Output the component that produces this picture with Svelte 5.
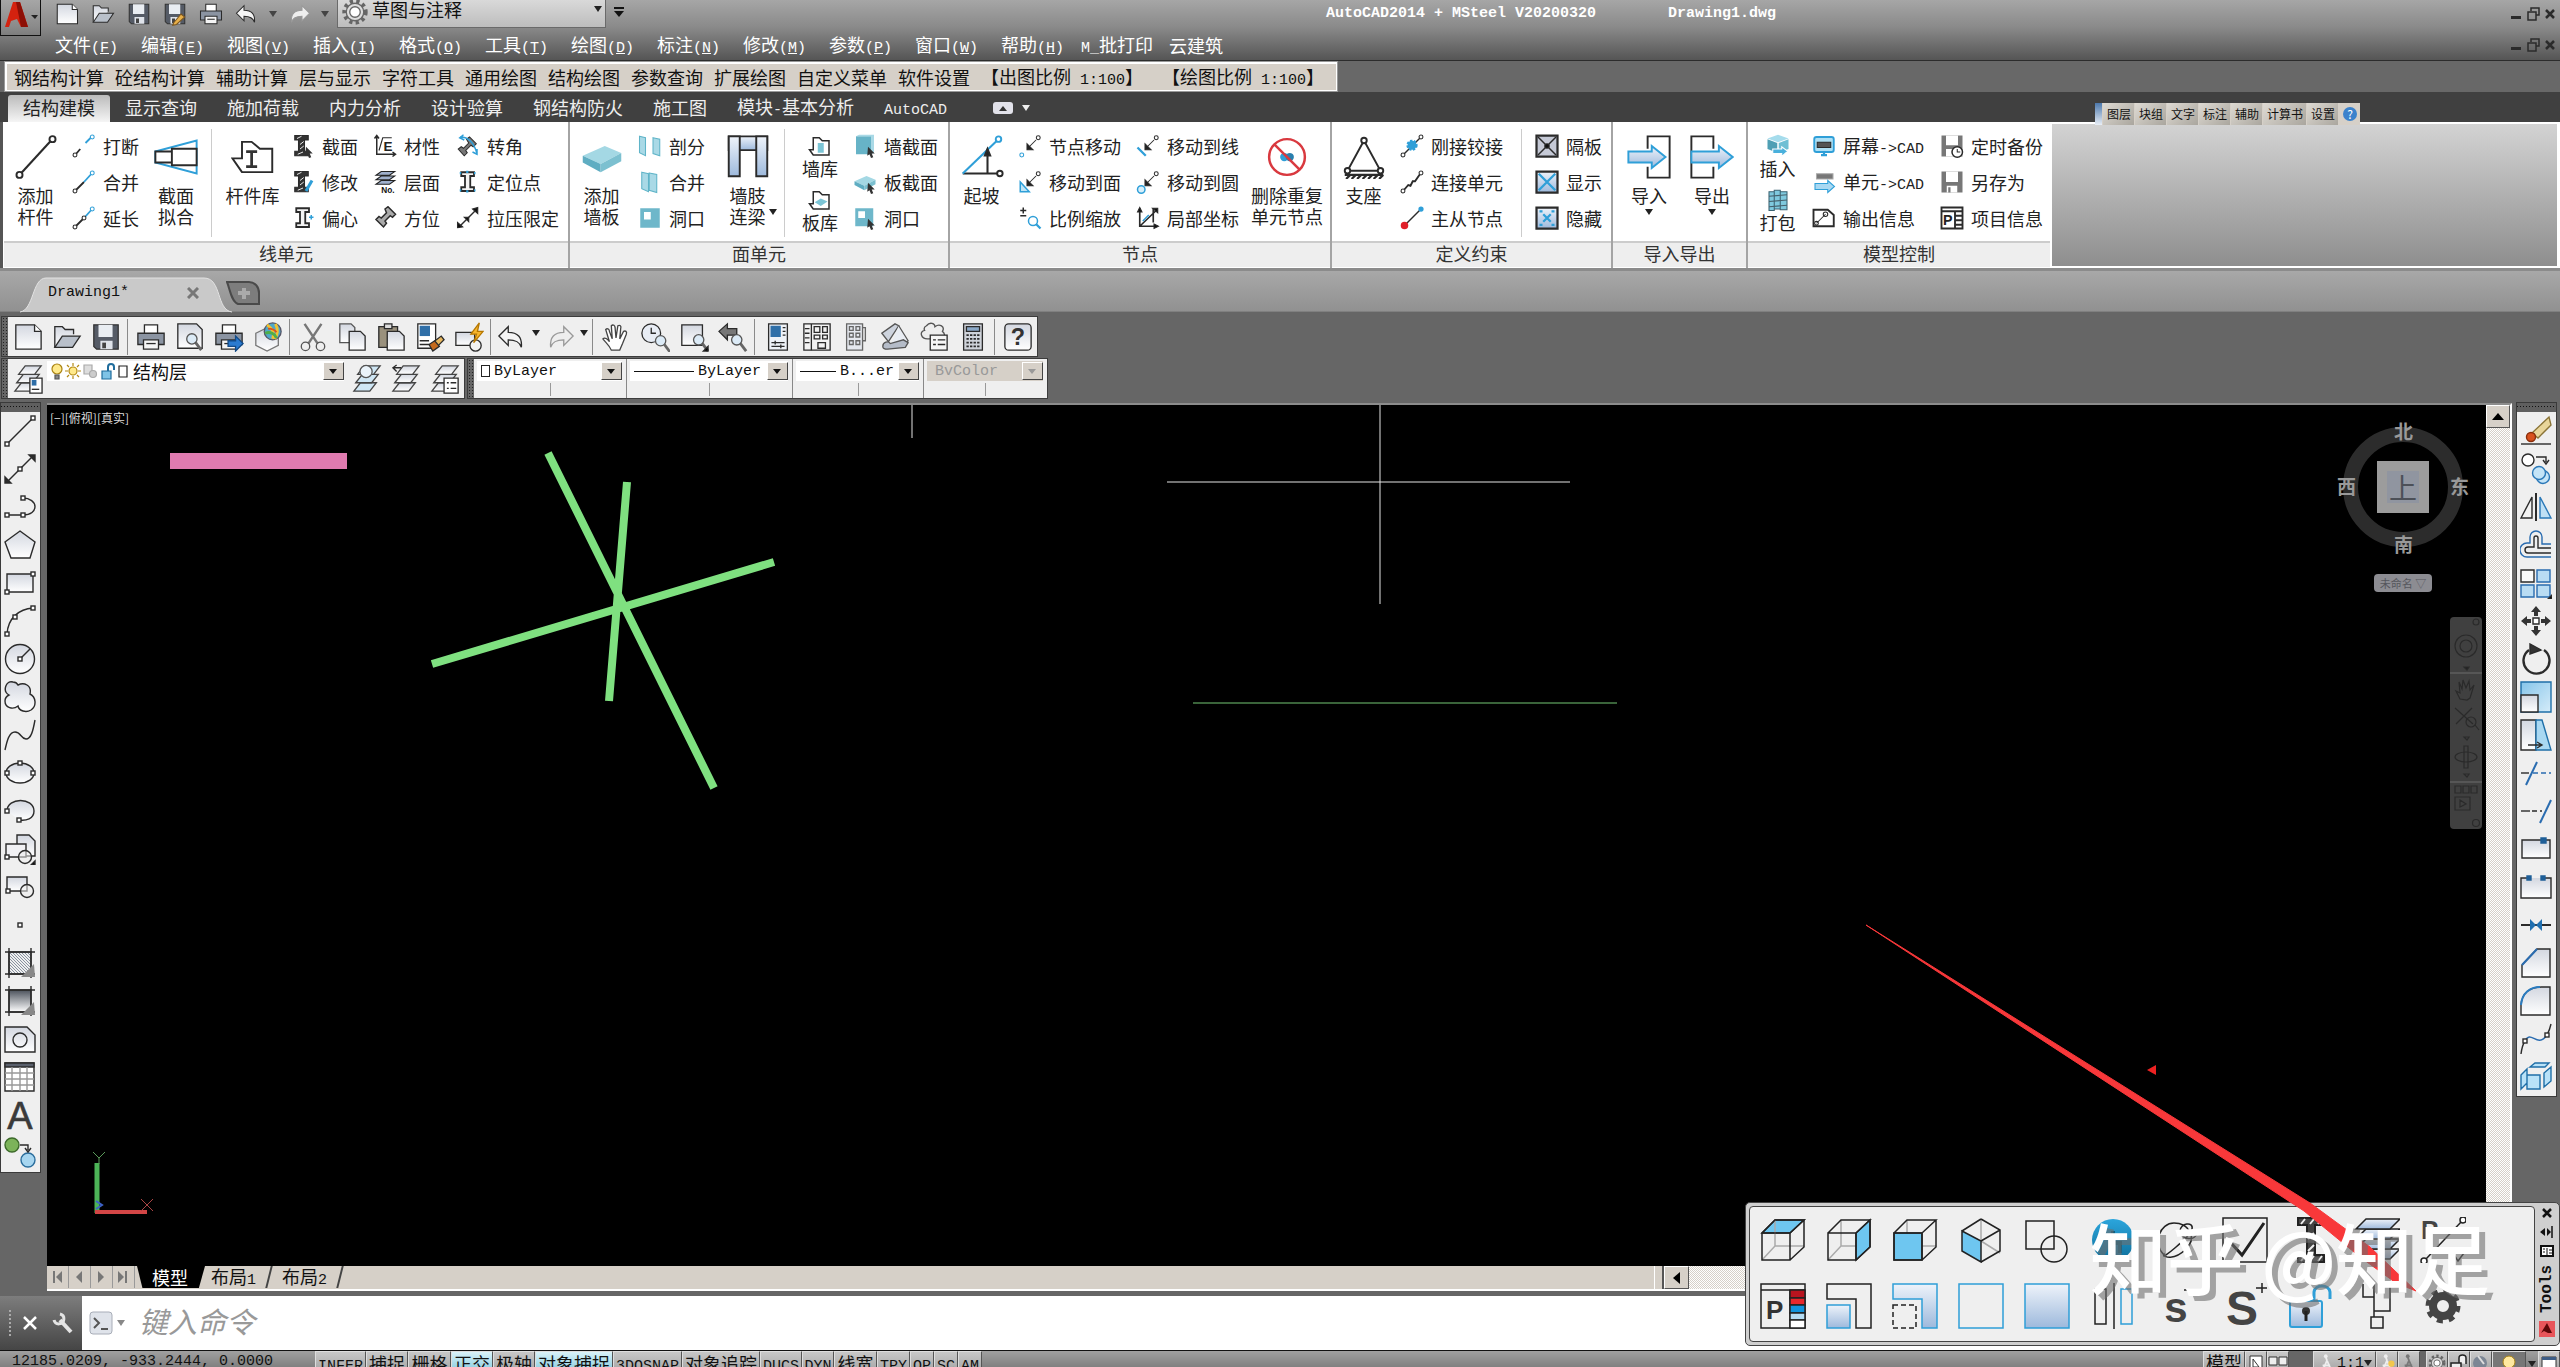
<script>
    const ink = "#2b2b2b";
    const sky = "#2f9fd8";
    const node = (x, y) => `<rect x="${x - 2}" y="${y - 2}" width="4" height="4" fill="#fff" stroke="${ink}"/>`;
    const dot = (x, y, c = ink) => `<circle cx="${x}" cy="${y}" r="2.6" fill="#fff" stroke="${c}"/>`;
    const mag = (x, y) =>
        `<path d="M${x + 4} ${y + 4}l6 8" stroke="#666" stroke-width="3"/><circle cx="${x}" cy="${y}" r="5.5" fill="#dcebf7" stroke="#555"/>`;
    const sheets = (f = "url(#steel)") =>
        `<g fill="${f}" stroke="#444"><path d="M2 29l7-9h17l-7 9z"/><path d="M4 20l7-9h17l-7 9z"/><path d="M6 11l7-9h17l-7 9z"/></g>`;
    const ibeam = `<path d="M7 3h17v5h-5v15h5v5H7v-5h5V8H7z" fill="#f4f4f4" stroke-width="2.4"/>`;
    const beamDark = `<path d="M5 2h18v6h-5v15h5v6H5v-6h5V8H5z" fill="#333"/><path d="M8 6l6-3M12 14l5-4M12 20l5-4M9 27l7-3" stroke="#fff" stroke-width="1.2"/>`;
    const cubeLines = `<path d="M15 3V29L2 43M15 29H44" stroke="#aaa"/>`;
    const cubeEdge = `<path d="M2 16H30V43H2ZM2 16L15 3H44L30 16M44 3V30L30 43"/>`;
    const slab = `<path d="M2 15L18 8l12 5-15 8z" fill="#a4d8e4" stroke="none"/><path d="M2 15l13 6v6L2 20z" fill="#5fadc2" stroke="none"/><path d="M15 21l15-8v6l-15 8z" fill="#7cc0d0" stroke="none"/>`;
    const moveArrow = `<path d="M24 8L13 19"/><path d="M12 13v8h8z" fill="#222"/>${dot(27, 5)}`;
    const cursor = `<path d="M20 17l9 9-4 0 2 5-3 1-2-5-3 2z" fill="#333" stroke="none"/>`;
    const floppy = `<path d="M3 3h26v26H6l-3-3z" fill="#555b66" stroke="#333"/><path d="M8 3h15v13H8z" fill="#e9edf2" stroke="none"/><path d="M10 20h13v9H10z" fill="#dfe3ea" stroke="none"/><path d="M12 22h4v6h-4z" fill="#444" stroke="none"/>`;
    const sheet = `<path d="M3 3h20l7 7v19H3z" fill="url(#steel)"/><path d="M23 3v7h7" fill="#fff"/>`;
    const folder = `<path d="M3 27V5h8l3 3h9v5" fill="url(#steel)"/><path d="M3 27l8-12h19l-8 12z" fill="#b9c0ca"/>`;
    const printer = `<path d="M9 12V3h14v9" fill="#fff"/><path d="M2 12h28v12H2z" fill="#8b94a2"/><path d="M8 19h16v10H8z" fill="#f5f5f5"/><path d="M11 23h10"/>`;
    const undo = `<path d="M12 5v6c10 0 15 5 14 16-2-6-6-8-14-8v6L2 15z" fill="#f5f5f5"/>`;
    const redo = `<path d="M20 5v6C10 11 5 16 6 27c2-6 6-8 14-8v6l10-10z" fill="#eee" stroke="#999"/>`;
    const hand = `<path d="M11 30c-2-5-6-8-9-12 2-2 5 0 7 3L5 8c2-2 4 0 4 2l3 8-1-14c2-2 4 0 4 2l1 11 2-13c2-1 4 0 3 3l-1 11 4-8c2-1 4 0 3 3l-4 10-3 7z" fill="#fff" stroke="#444"/>`;
    const gear = (x, y, r, f = "#ddd") =>
        `<circle cx="${x}" cy="${y}" r="${r}" fill="none" stroke="#666" stroke-width="5" stroke-dasharray="3.6 3.6"/><circle cx="${x}" cy="${y}" r="${r - 2}" fill="${f}" stroke="#666" stroke-width="1.500"/><circle cx="${x}" cy="${y}" r="${r - 6}" fill="#fff" stroke="#666" stroke-width="1.500"/>`;
    const crop = `<path d="M5 1v30M27 1v30M1 5h30M1 27h30"/>`;
    const person = (c) => `<path d="M13 4l3 8 6 14M16 12l-6 14M9 20h12" stroke="${c}" stroke-width="3"/><circle cx="14" cy="5" r="3" fill="${c}" stroke="none"/>`;

    const icons = {
        // quick access and standard bar
        new: sheet,
        open: folder,
        save: floppy,
        saveas: floppy + `<path d="M14 28l10-12 5 4-11 10-5 1z" fill="#e8b04a" stroke="#7a5520"/>`,
        print: printer,
        undo,
        redo,
        preview: `<path d="M3 2h20l6 6v20H3z" fill="url(#steel)"/>${mag(18, 18)}`,
        plot: printer + `<path d="M15 20h8v-5l8 8-8 8v-5h-8z" fill="#2b7bd0" stroke="#134a86"/>`,
        web: `<path d="M3 12l12-6 12 6v13l-12 6-12-6z" fill="url(#steel)" stroke="#777"/><circle cx="21" cy="10" r="9" fill="#4fa8c9" stroke="#556"/><path d="M15 3c6 4 8 9 6 15M24 2c3 6 2 12-1 16" stroke="#f2c230" stroke-width="3"/><path d="M13 12c5-2 10 0 12 5" stroke="#4fae4a" stroke-width="3"/><path d="M16 7c4 0 7 1 9 4" stroke="#d9531e" stroke-width="2"/>`,
        cut: `<path d="M7 2l14 21M25 2L11 23" stroke-width="2.6" stroke="#777"/><circle cx="8" cy="26" r="4.500" stroke="#555"/><circle cx="24" cy="26" r="4.500" stroke="#555"/>`,
        copy: `<path d="M3 2h12l4 4v16H3z" fill="url(#steel)" stroke="#555"/><path d="M13 10h12l5 5v15H13z" fill="url(#steel)"/>`,
        paste: `<path d="M3 5h20v22H3z" fill="#9a917d"/><path d="M9 2h8v5H9z" fill="#ddd"/><path d="M12 10h13l5 5v15H12z" fill="url(#steel)"/>`,
        match: `<path d="M3 2h19v26H3z" fill="#fff"/><path d="M5 4h11v11H5z" fill="#2f6fa8" stroke="none"/><path d="M5 20h10M5 24h10"/><path d="M20 21l8-6 3 4-7 7z" fill="#e6b65e"/><path d="M15 24l6-4 5 6-7 5z" fill="#c46a1d"/>`,
        blockedit: `<path d="M2 11h20v14H2z" fill="url(#steel)"/><circle cx="23" cy="25" r="6" fill="#f2f2f2"/><path d="M27 1l-9 12h6l-3 9 10-12h-6z" fill="#f7b52c" stroke="#b57700"/>`,
        pan: hand,
        zoom: `<circle cx="12" cy="12" r="10" fill="#e8edf5"/><path d="M12 6v6h5"/>${mag(22, 20)}`,
        zoomwin: `<path d="M3 3h22v22H3z" fill="url(#steel)"/>${mag(21, 19)}<path d="M31 26v5h-5z" fill="#000"/>`,
        zoomprev: `<path d="M1 10l9-8v5h10v7H10v5z" fill="#777"/>${mag(20, 19)}`,
        props: `<path d="M6 2h20v28H6z" fill="#eef2f7"/><path d="M8 4h11v12H8z" fill="#2f6fa8" stroke="none"/><path d="M21 6h3M21 10h3M21 14h3M9 22h14M9 26h14M13 20v4M19 24v4"/>`,
        center: `<path d="M2 2h28v28H2z" fill="#f2f2f2"/><path d="M10 2v28M3 7h5M3 12h5M3 17h5M3 22h5M13 5h6v6h-6zM22 5h5v6h-5zM13 14h6v4h-6zM22 14h5v4h-5zM17 22h8v6h-8z"/>`,
        palettes: `<path d="M6 2h17v28H6z" fill="#e5e8ee" stroke="#666"/><path d="M9 5h4v4H9zM16 5h4v4h-4zM9 12h4v4H9zM16 12h4v4h-4zM9 20h4v4H9zM16 20h4v4h-4zM23 6h3v14h-3" stroke="#666"/>`,
        sheetset: `<path d="M2 12l7 9L20 4l-4-2z" fill="#cdd3dd" stroke="#555"/><path d="M20 4l10 16-6 5-13 1" fill="#e9edf3" stroke="#555"/><path d="M3 26c0-5 6-6 8-3l14-4 5 3-3 5-19 2c-3 0-5-1-5-3z" fill="#b5bcc8" stroke="#555"/>`,
        markup: `<path d="M8 4c4-5 9-2 9 1 5-4 11 0 8 5 4 3 2 8-2 8H9c-7 0-9-8-3-9-1-2 0-4 2-5z" fill="#eee" stroke="#555"/><path d="M12 14h18v16H12z" fill="#f6f6f6"/><path d="M15 19h3M15 24h3M20 19h8M20 24h8"/>`,
        calc: `<path d="M6 2h20v28H6z" fill="#cfd3da"/><path d="M9 5h14v5H9z" fill="#8ba9c8"/><path d="M9 14h14M9 18h14M9 22h14M9 26h14" stroke-dasharray="2.5 1.3" stroke-width="2"/>`,
        help: `<rect x="2" y="2" width="28" height="28" rx="4" fill="url(#steel)"/><text x="16" y="25" text-anchor="middle" font-size="25" font-weight="bold" font-family="Liberation Sans" fill="#333" stroke="none">?</text>`,
        layers: sheets() + `<path d="M18 15h13v16H18z" fill="#fff"/><path d="M20 17h5v6h-5z" fill="#2f6fa8" stroke="none"/><path d="M20 27h8"/>`,
        layer1: sheets("#cfe6f4") + `<circle cx="15" cy="8" r="6.500" fill="#eaf3fa" stroke="#555"/>`,
        layer2: sheets() + `<path d="M11 4H3m3-3L2 4l4 4"/>`,
        layer3: sheets() + `<path d="M15 15h15v16H15z" fill="#fff"/><path d="M18 20h2M18 26h2M22 20h6M22 26h6"/>`,
        // draw bar
        line: `<path d="M3 29L29 3"/>${node(3, 29)}${node(29, 3)}`,
        xline: `<path d="M3 29L29 3"/><path d="M25 2h6v6zM1 24v6h6z" fill="${ink}"/>${node(16, 16)}`,
        pline: `<path d="M3 24H19C27 24 31 20 31 15.500S26 7 19 7"/>${node(3, 24)}${node(19, 24)}${node(19, 7)}`,
        polygon: `<path d="M16 2L31 13L26 29H7L1 13Z" fill="url(#steel)"/>`,
        rect: `<path d="M3 7H29V25H3Z" fill="url(#steel)"/>${node(3, 25)}${node(29, 7)}`,
        arc: `<path d="M3 29C4 13 15 4 29 3"/>${node(3, 29)}${node(11, 12)}${node(29, 3)}`,
        circle: `<circle cx="16" cy="16" r="14.500" fill="url(#steel)"/><path d="M16 16L26 6"/>${node(16, 16)}`,
        cloud: `<path d="M14 4c6-3 14 0 12 9 6 3 7 12 1 16-5 3-12 1-13-4-5 4-13 2-13-5 0-4 2-5 4-6C-2 10 2-1 9 1c3 0 4 1 5 3z" fill="url(#steel)"/>`,
        spline: `<path d="M1 31C3 22 5 13 11 13S17 20 22 20S29 12 31 1"/>`,
        ellipse: `<ellipse cx="16" cy="16" rx="14" ry="10" fill="url(#steel)"/>${node(16, 6)}${node(3, 16)}${node(29, 16)}`,
        ellarc: `<path d="M3 16C3 2 30 2 30 16C30 24 22 26 15 25" fill="url(#steel)"/>${node(3, 16)}${node(15, 25)}`,
        insert: `<path d="M13 2h12l6 6v15H13z" fill="url(#steel)"/><path d="M2 11h20v13H2z" fill="#f1f1f4"/><circle cx="21" cy="24" r="6.500" fill="#eee8"/>${node(3, 24)}<path d="M31 28v4h-4z" fill="#000"/>`,
        block: `<path d="M3 6h20v14H3z" fill="url(#steel)"/><circle cx="23" cy="20" r="6.500" fill="#eee8"/>${node(4, 20)}`,
        point: node(16, 16),
        hatch: `<path d="M5 5h22v22H5z" fill="url(#diag)"/>${crop}<path d="M30 17L17 30h14z" fill="#888" stroke="none"/>`,
        gradient: `<path d="M5 5h22v22H5z" fill="url(#shade)"/>${crop}<path d="M30 17L17 30h14z" fill="#888" stroke="none"/>`,
        region: `<path d="M1 4h22l8 8v17H1z" fill="url(#steel)"/><circle cx="16" cy="17" r="7"/>`,
        table: `<path d="M1 2h29v28H1z" fill="#fff"/><path d="M1 2h29v4H1z" fill="#5a606c"/><path d="M8 6v24M16 6v24M23 6v24M1 12h29M1 18h29M1 24h29" stroke="#999"/>`,
        text: `<text x="16" y="30" text-anchor="middle" font-size="38" font-family="Liberation Sans" fill="#3a3a3a" stroke="#3a3a3a" stroke-width="0.6">A</text>`,
        addsel: `<circle cx="8" cy="8" r="7" fill="#7cb35a" stroke="#3c6a2a"/><circle cx="24" cy="23" r="7" fill="#a7d6f0" stroke="#2a6d9c"/><path d="M16 8h8v5m-3-2l3 4 3-4"/>`,
        // modify bar
        erase: `<path d="M12 18L29 2l2 8-13 13z" fill="#e8d59a" stroke="#8a7437"/><circle cx="11" cy="22" r="4.500" fill="#d8521f" stroke="#8a2f0c"/><path d="M1 29h30" stroke-width="2" stroke="#666"/>`,
        mcopy: `<circle cx="8" cy="7" r="6" fill="#fff"/><g fill="#c4e4f7" stroke="#2a78b8"><circle cx="23" cy="24" r="6.500"/><circle cx="19" cy="20" r="6.500"/></g><path d="M16 4h10v5m-3-2l3 4 3-4"/>`,
        mirror: `<path d="M12 6v21H1z" fill="#f2f2f2"/><path d="M20 6v21h11z" fill="#bfe0f5" stroke="#2a78b8"/><path d="M16 2v28" stroke-width="2"/>`,
        offset: `<path d="M31 15H22V8a6 6 0 0 0-12 0v6H7a7 7 0 0 0 0 14h24" stroke="#2a6cb0"/><path d="M31 19H18V9a2 2 0 0 0-4 0v9H8a3 3 0 0 0 0 6h23"/>`,
        array: `<path d="M1 3h13v12H1z" fill="#fafafa"/><g fill="#b9dcf3" stroke="#2a6cb0"><path d="M17 3h13v12H17zM1 18h13v12H1zM17 18h13v12H17z"/></g><path d="M32 28v4h-4z" fill="#000"/>`,
        move: `<g fill="#333" stroke="none"><path d="M16 1l5 6h-3v4h-4V7h-3zM16 31l5-6h-3v-4h-4v4h-3zM1 16l6-5v3h4v4H7v3zM31 16l-6-5v3h-4v4h4v3z"/></g><path d="M13 13h6v6h-6z" fill="#fff"/>`,
        rotate: `<path d="M9 7A13 13 0 1 0 24 7" stroke-width="2.400"/><path d="M10 1v10l11-4z" fill="#333"/>`,
        scale: `<path d="M1 1h30v30H1z" fill="url(#blue)" stroke="#1f6fa8"/><path d="M1 14h17v17H1z" fill="url(#steel)"/>`,
        stretch: `<path d="M1 1h15v30H1z" fill="url(#steel)"/><path d="M16 1h6l9 30H16z" fill="#a9d8f2" stroke="#1f6fa8"/><path d="M8 26h13m-4-3l5 3-5 3"/>`,
        trim: `<path d="M1 16h8"/><path d="M13 16h18" stroke="#2a6cb0" stroke-dasharray="5 3"/><path d="M6 28L17 5" stroke="#2a6cb0" stroke-width="2"/>`,
        extend: `<path d="M1 16h9"/><path d="M12 16h10" stroke-dasharray="5 3"/><path d="M20 28L31 5" stroke="#2a6cb0" stroke-width="2"/>`,
        breakpt: `<path d="M2 7h28v18H2z" fill="url(#steel)"/><path d="M21 5h5v5h-5z" fill="#1f5f98" stroke="#1f5f98"/>`,
        break2: `<path d="M9 7H1v20h30V7h-8" fill="url(#steel)"/><path d="M7 5h4v4H7zM21 5h4v4h-4z" fill="#1f5f98" stroke="#1f5f98"/>`,
        join: `<path d="M1 16h30" stroke-width="2"/><path d="M10 10v12l6-6zM22 10v12l-6-6z" fill="#1f6fb0" stroke="none"/>`,
        chamfer: `<path d="M2 30V18L17 2h13v28z" fill="url(#steel)"/><path d="M2 18L17 2" stroke="#2a6cb0" stroke-width="2"/>`,
        fillet: `<path d="M1 30V20C2 8 10 2 22 2h8v28z" fill="url(#steel)"/><path d="M1 20C2 8 10 2 20 2" stroke="#2a7cc0" stroke-width="2"/>`,
        blend: `<path d="M1 31c1-8 2-10 4-13M27 12c2-4 3-6 4-11"/><path d="M5 18c6-12 12 8 22-6" stroke="#2a6cb0"/>${node(5, 18)}${node(27, 12)}`,
        explode: `<g fill="#b9e2f8" stroke="#1f6fa8"><path d="M10 6l5-4h14l-4 4zM1 14l6-6v14l-6 6zM24 12l7-6v14l-7 6zM7 14h13v14H7z"/></g>`,
        // member panel
        bar: `<path d="M5 28L27 4" stroke-width="1.500"/><circle cx="4" cy="29" r="2.200" fill="#fff"/><circle cx="28" cy="3" r="2.200" fill="#fff"/>`,
        breakbar: `<path d="M5 27l6-7" stroke-width="2.400"/><path d="M18 12l7-7" stroke="${sky}" stroke-width="2.400"/>${dot(4, 28)}${dot(27, 4, sky)}`,
        joinbar: `<path d="M5 27L16 16" stroke-width="2.400"/><path d="M16 16L26 5" stroke="${sky}" stroke-width="2.400"/>${dot(4, 28)}${dot(27, 4, sky)}`,
        extbar: `<path d="M5 27L17 15" stroke-width="2.400"/><path d="M17 15L26 5" stroke="${sky}" stroke-width="2.400"/>${dot(4, 28)}${dot(16, 16)}${dot(27, 4, sky)}`,
        fit: `<path d="M1 12L31 4v24L1 20z" stroke="${sky}" fill="#fff"/><path d="M1 12h12v8H1zM13 10h18v12H13z" fill="#fff"/>`,
        lib: `<path d="M8 27L1 17h7V5h7l6 5h9v17z" fill="#fff"/><path d="M11 11h8v2h-3v9h3v2h-8v-2h3v-9h-3z" fill="#333" stroke="none"/>`,
        section: beamDark + cursor,
        modify: beamDark + `<path d="M28 14l-8 14" stroke="${sky}" stroke-width="4"/>`,
        eccentric: ibeam + `<path d="M27 12v6M24 15h6" stroke="${sky}" stroke-width="2"/>`,
        material: `<path d="M5 3v24h24M2 6l3-4 3 4M26 24l4 3-4 3" stroke-width="2"/><path d="M8 22L13 5h12" stroke-width="1.500"/><text x="14" y="23" font-size="18" font-weight="bold" font-family="Liberation Sans" fill="#222" stroke="none">E</text>`,
        layerno: `<g fill="#9fb0cc" stroke="#222"><path d="M4 19l7-5h18l-7 5zM4 13l7-5h18l-7 5zM4 7l7-5h18l-7 5z"/></g><text x="11" y="31" font-size="11" font-weight="bold" font-family="Liberation Sans" fill="#111" stroke="none">No.</text>`,
        orient: `<path d="M16 4l4-3 10 10-4 4-3-2-7 7 2 3-4 5-10-10 4-4 3 2 7-7z" fill="#aaa" stroke-width="2"/>`,
        angle: `<path d="M14 7l4-3 9 9-4 4-3-2-7 7 2 3-4 4-8-9 4-3 3 2 7-7z" fill="#777"/><path d="M6 4c12 0 18 8 22 22m0-6v7l-6-3M10 1L5 5l6 3" stroke="${sky}" stroke-width="2"/>`,
        locate: ibeam + `<path d="M15 1v3M15 27v3M5 4h2M24 4h2M5 27h2M24 27h2" stroke="${sky}" stroke-width="3"/>`,
        limit: `<path d="M3 29L29 3" stroke-width="2"/><path d="M29 2v8l-7-6zM2 29v-7l7 6zM11 15l6 0 0 6z" fill="#111"/>`,
        // slab panel
        slab,
        split: `<g fill="#a9d9e6" stroke="#5fb4c8"><path d="M2 3l8 2v24l-8-4zM20 5l9 2v22l-9-3z"/></g>`,
        merge: `<g fill="#a9d9e6" stroke="#5fb4c8"><path d="M5 3l9 2v24l-9-4zM15 4l10 2v24l-10-3z"/></g>`,
        hole: `<path d="M3 3h26v26H3z" fill="#6eb7ca" stroke="none"/><path d="M8 8h9v10H8z" fill="#fff" stroke="none"/>`,
        pier: `<g fill="url(#blue2)"><path d="M2 1h28v10H2z"/><path d="M2 1h8v29H2zM22 1h8v29h-8z"/></g>`,
        walllib: `<path d="M7 28l-5-7h5V5h8l4 4h9v19z" fill="#fff" stroke-width="2"/><path d="M13 12h8v13h-8z" fill="#7cc5d6" stroke="none"/>`,
        slablib: `<path d="M7 28l-5-7h5V5h8l4 4h9v19z" fill="#fff" stroke-width="2"/><path d="M9 19l8-5 9 4-9 6z" fill="#7cc5d6" stroke="none"/>`,
        wallsec: `<path d="M4 3h20v24H4z" fill="#67b3c7" stroke="none"/><path d="M4 3l4-2h20l-4 2zM24 3l4-2v24l-4 2z" fill="#a9d9e6" stroke="none"/>${cursor}`,
        slabsec: slab + cursor,
        holesec: `<path d="M3 3h24v24H3z" fill="#6eb7ca" stroke="none"/><path d="M7 7h9v9H7z" fill="#fff" stroke="none"/>${cursor}`,
        // node panel
        slope: `<path d="M2 28h26M20 10v18" stroke-width="1.500"/><path d="M2 28L27 4" stroke="${sky}" stroke-width="1.500"/><circle cx="29" cy="28" r="2" fill="#fff"/><circle cx="28" cy="3" r="2" fill="#fff" stroke="${sky}"/><path d="M18 15l2-5 2 5z" fill="#222"/>`,
        nmove: moveArrow + dot(5, 28, sky),
        nface: moveArrow + `<path d="M3 16v13h12z" stroke="${sky}" stroke-width="2" fill="#bfe5f7"/>`,
        nscale: `<path d="M3 6h8M7 2v8M3 13h8" stroke-width="2"/><circle cx="20" cy="20" r="6" stroke="${sky}" stroke-width="2"/><path d="M24 24l6 6" stroke="${sky}" stroke-width="3"/>`,
        nline: moveArrow + `<path d="M2 18l11 11" stroke="${sky}" stroke-width="3"/>`,
        ncircle: moveArrow + `<circle cx="7" cy="26" r="5" stroke="${sky}" fill="#d8effa" stroke-width="2"/>`,
        naxis: `<path d="M5 3v24h24M5 27L28 5M23 4v18" stroke-width="2.200"/><path d="M2 8l3-6 3 6zM24 24l6 3-6 3zM22 3h7v6z" fill="#111"/><path d="M9 20l8-8" stroke="${sky}" stroke-width="2"/>`,
        nodel: `<circle cx="16" cy="16" r="13" stroke="#d9393f" stroke-width="1.800"/><circle cx="14" cy="16" r="3" fill="${sky}" stroke="none"/><circle cx="18" cy="16" r="3" fill="#2a7fae" stroke="none"/><path d="M7 7l18 18" stroke="#d9393f" stroke-width="1.800"/>`,
        // constraint panel
        support: `<path d="M16 4L4 26h24z"/><path d="M2 29h28M3 32l3-3M7 32l3-3M11 32l3-3M15 32l3-3M19 32l3-3M23 32l3-3M27 32l3-3" stroke-width="1.600"/><g fill="#fff"><circle cx="16" cy="4" r="2"/><circle cx="4" cy="26" r="2"/><circle cx="28" cy="26" r="2"/></g>`,
        rigid: `<path d="M4 28L28 4" stroke-width="2"/><circle cx="16" cy="15" r="6" fill="${sky}" stroke="${sky}" stroke-dasharray="3 2" stroke-width="3"/>${dot(4, 28)}${dot(28, 4)}`,
        linkel: `<path d="M5 27l6-7 3 1 3-6 3 0 7-10" stroke-width="2.500"/>${dot(4, 28)}${dot(28, 4)}`,
        master: `<path d="M5 27L27 5" stroke-width="2"/><circle cx="6" cy="26" r="5" fill="#e0202a" stroke="none"/><circle cx="28" cy="4" r="3.500" fill="${sky}" stroke="none"/>`,
        diaph: `<path d="M2 2h28v28H2z" fill="#c5c9d6" stroke-width="3"/><path d="M4 4l24 24M28 4L4 28" stroke-width="2"/><circle cx="16" cy="16" r="3" fill="#111"/>`,
        show: `<path d="M2 2h28v28H2z" fill="url(#blue2)" stroke-width="3"/><path d="M5 5l22 22M27 5L5 27" stroke="${sky}" stroke-width="3"/>`,
        hide: `<path d="M2 2h28v28H2z" fill="url(#blue2)" stroke-width="3"/><path d="M11 11l10 10M21 11L11 21M6 7h4M22 7h4M6 25h4M22 25h4" stroke="${sky}" stroke-width="3"/>`,
        // import and export
        imp: `<path d="M15 10V1h16v30H15v-8"/><path d="M1 12h17V8l10 8-10 8v-4H1z" fill="url(#blue2)" stroke="${sky}"/>`,
        exp: `<path d="M17 10V1H1v30h16v-8"/><path d="M1 12h20V8l10 8-10 8v-4H1z" fill="url(#blue2)" stroke="${sky}"/>`,
        insertm: `<path d="M2 6l14-5 14 5-14 5z" fill="#a5dcec" stroke="none"/><path d="M2 7l13 5v13L2 20z" fill="#4f9fb4" stroke="none"/><path d="M30 7l-13 5v13l13-5z" fill="#6fbfd4" stroke="none"/><path d="M9 20h12v-3l8 6-8 7v-4H9z" fill="#49b0dc" stroke="#fff"/>`,
        pack: `<path d="M4 5h7v25H4zM11 3h8v25h-8zM19 5h9v24h-9z" fill="#7fc9de" stroke="#3a6272"/><path d="M4 11l24-2M4 18l24-2M4 25l24-2" stroke="#46606b" stroke-width="1.500"/>`,
        screen: `<rect x="3" y="4" width="26" height="20" rx="3" fill="#aee0f5" stroke="${sky}" stroke-width="2.500"/><path d="M7 11h18v7H7z" fill="#555"/><path d="M12 28h8M16 24v4" stroke="${sky}" stroke-width="3"/>`,
        unit: `<path d="M6 5h22v7H6z" fill="#777" stroke="#aaa"/><path d="M4 18h17v-4l9 8-9 8v-4H4z" fill="#a8d8f2" stroke="${sky}"/>`,
        output: `<path d="M2 5h19l8 7v15H2z" fill="#fff" stroke-width="2.500"/><path d="M6 23L18 11"/><circle cx="6" cy="23" r="2.500"/><circle cx="18" cy="11" r="3"/>`,
        backup: `<path d="M2 2h28v28H2z" fill="#777" stroke="none"/><path d="M8 2h16v13H8zM8 20h12v10H8z" fill="#fff" stroke="none"/><circle cx="23" cy="24" r="7" fill="#fff" stroke-width="2"/><path d="M23 20v4h4"/>`,
        saveto: `<path d="M2 2h28v28H2z" fill="#777" stroke="none"/><path d="M8 2h16v14H8zM9 21h14v9H9z" fill="#fff" stroke="none"/><path d="M11 23h3v7h-3z" fill="#777" stroke="none"/>`,
        project: `<path d="M2 2h28v28H2zM2 7h28M20 7v23M20 13h10M20 19h10M20 25h10" stroke-width="2.500"/><text x="4" y="25" font-size="19" font-weight="bold" font-family="Liberation Sans" fill="#222" stroke="none">P</text>`,
    };

    const tools = [
        `<path d="M2 16L15 3H44L30 16Z" fill="#6ec6f0"/>` + cubeLines + cubeEdge,
        cubeLines + `<path d="M30 16L44 3V30L30 43Z" fill="#6ec6f0"/>` + cubeEdge,
        cubeLines + `<path d="M2 16H30V43H2Z" fill="#6ec6f0"/>` + cubeEdge,
        `<path d="M23 2V24L42 36" stroke="#aaa"/><path d="M4 14L23 24V45L4 34Z" fill="#6ec6f0"/><path d="M23 2L42 13V34L23 45M4 14L23 2M23 24L42 13"/>`,
        `<path d="M2 4H30V32H2Z"/><circle cx="30" cy="32" r="13"/>`,
        `<circle cx="23" cy="23" r="21" fill="url(#ball)" stroke="none"/><path d="M20 36V26H30V36M23 14v4" stroke="#0e5f80" stroke-width="4"/>`,
        `<path d="M8 38C-4 26 4 6 18 6s24 14 12 26S8 40 8 38C4 44 34 20 36 12S24 6 24 14s16 12 18 0"/>`,
        `<path d="M1 1H45V45H1Z"/><path d="M9 26L20 38L42 6" stroke-width="3"/>`,
        `<path d="M10 1H36V8H27V38H36V45H10V38H19V8H10Z" fill="#444" stroke-width="2"/><path d="M13 7l4-5M22 7l4-5M30 7l4-5M13 44l4-5M22 44l4-5M30 44l4-5M20 34l6-6M20 22l6-6" stroke="#eee" stroke-width="2"/>`,
        `<g fill="url(#blue2)"><path d="M2 42L12 32H46L36 42Z"/><path d="M2 32L12 22H46L36 32Z"/><path d="M2 22L12 12H46L36 22Z"/><path d="M2 12L12 2H46L36 12Z"/></g>`,
        `<path d="M6 42L42 4"/><circle cx="4" cy="44" r="3" fill="#fff"/><circle cx="43" cy="3" r="3" fill="#fff"/><path d="M34 38l4 6 6-8"/><text x="1" y="22" font-size="26" font-weight="bold" font-family="Liberation Sans" fill="#444" stroke="none">P</text>`,
        `<path d="M1 1H45V45H1ZM1 7H45M30 7V45"/><path d="M30 7H45V15H30Z" fill="#b8141f"/><path d="M30 15H45V22H30Z" fill="#e8272b"/><path d="M30 22H45V30H30Z" fill="#1193dc"/><path d="M30 30H45V37H30Z" fill="#b5dcf3"/><path d="M30 37H45V45H30Z" fill="#fff"/><text x="6" y="36" font-size="26" font-weight="bold" font-family="Liberation Sans" fill="#333" stroke="none">P</text>`,
        `<path d="M1 1H45V45H30V16H1Z"/><path d="M1 22H24V45H1Z" fill="url(#blue2)" stroke="#2f9fd8"/>`,
        `<path d="M1 1H45V45H30V16H1Z" fill="url(#blue2)" stroke="#2f9fd8"/><path d="M1 22H24V45H1Z" stroke-dasharray="5 3" stroke-width="1.500"/>`,
        `<path d="M1 1H45V45H1Z" stroke="#2f9fd8"/>`,
        `<path d="M1 1H45V45H1Z" fill="url(#blue2)" stroke="#2f9fd8"/>`,
        `<path d="M5 6H16V41H5ZM24 0V46"/><path d="M31 6H42V41H31Z" stroke="#2f9fd8"/>`,
        `<text x="20" y="39" text-anchor="middle" font-size="42" font-weight="bold" font-family="Liberation Sans" fill="#444" stroke="none">s</text><path d="M28 7H38"/>`,
        `<text x="20" y="42" text-anchor="middle" font-size="48" font-weight="bold" font-family="Liberation Sans" fill="#444" stroke="none">S</text><path d="M34 5H45M40 0V10"/>`,
        `<rect x="2" y="18" width="32" height="26" rx="2" fill="url(#blue2)" stroke="#2f9fd8" stroke-width="2"/><path d="M26 18V9C27 1 41 1 42 9V16" stroke="#2f9fd8" stroke-width="3"/><circle cx="18" cy="28" r="4" fill="#333" stroke="none"/><path d="M18 28v10" stroke-width="3"/>`,
        `<path d="M9 1V14H20M20 1V28H36V1M20 28V34"/><path d="M17 34H29V45H17Z"/>`,
        `<circle cx="23" cy="23" r="15" stroke="#444" stroke-width="5" stroke-dasharray="5.900 5.880"/><circle cx="23" cy="23" r="10" stroke="#444" stroke-width="8"/>`,
    ];

    const menus = [
        ["文件", "F"], ["编辑", "E"], ["视图", "V"], ["插入", "I"], ["格式", "O"], ["工具", "T"], ["绘图", "D"],
        ["标注", "N"], ["修改", "M"], ["参数", "P"], ["窗口", "W"], ["帮助", "H"],
    ];
    const steelMenus = ["钢结构计算", "砼结构计算", "辅助计算", "层与显示", "字符工具", "通用绘图", "结构绘图", "参数查询", "扩展绘图", "自定义菜单", "软件设置"];
    const ribbonTabs = ["结构建模", "显示查询", "施加荷载", "内力分析", "设计验算", "钢结构防火", "施工图", "模块-基本分析", "AutoCAD"];

    const big = (w, icon, lines, arrow) => ({ kind: "big", w, icon, lines, arrow });
    const col = (w, ...rows) => ({ kind: "col", w, rows });
    const pair = (w, ...rows) => ({ kind: "pair", w, rows });
    const sep = (w = 15) => ({ kind: "sep", w });

    const panels = [
        { title: "线单元", w: 566, items: [
            big(63, "bar", ["添加", "杆件"]),
            col(81, ["breakbar", "打断"], ["joinbar", "合并"], ["extbar", "延长"]),
            big(56, "fit", ["截面", "拟合"]),
            sep(),
            big(67, "lib", ["杆件库"]),
            col(82, ["section", "截面"], ["modify", "修改"], ["eccentric", "偏心"]),
            col(83, ["material", "材性"], ["layerno", "层面"], ["orient", "方位"]),
            col(116, ["angle", "转角"], ["locate", "定位点"], ["limit", "拉压限定"]),
        ] },
        { title: "面单元", w: 380, items: [
            big(63, "slab", ["添加", "墙板"]),
            col(85, ["split", "剖分"], ["merge", "合并"], ["hole", "洞口"]),
            big(59, "pier", ["墙肢", "连梁"], "beside"),
            sep(),
            pair(56, ["walllib", "墙库"], ["slablib", "板库"]),
            col(100, ["wallsec", "墙截面"], ["slabsec", "板截面"], ["holesec", "洞口"]),
        ] },
        { title: "节点", w: 382, items: [
            big(63, "slope", ["起坡"]),
            col(118, ["nmove", "节点移动"], ["nface", "移动到面"], ["nscale", "比例缩放"]),
            col(118, ["nline", "移动到线"], ["ncircle", "移动到圆"], ["naxis", "局部坐标"]),
            big(76, "nodel", ["删除重复", "单元节点"]),
        ] },
        { title: "定义约束", w: 281, items: [
            big(63, "support", ["支座"]),
            col(117, ["rigid", "刚接铰接"], ["linkel", "连接单元"], ["master", "主从节点"]),
            sep(18),
            col(80, ["diaph", "隔板"], ["show", "显示"], ["hide", "隐藏"]),
        ] },
        { title: "导入导出", w: 135, items: [big(72, "imp", ["导入"], "below"), big(54, "exp", ["导出"], "below")] },
        { title: "模型控制", w: 304, items: [
            pair(59, ["insertm", "插入"], ["pack", "打包"]),
            col(128, ["screen", "屏幕->CAD"], ["unit", "单元->CAD"], ["output", "输出信息"]),
            col(115, ["backup", "定时备份"], ["saveto", "另存为"], ["project", "项目信息"]),
        ] },
    ];

    const floatTabs = ["图层", "块组", "文字", "标注", "辅助", "计算书", "设置"];
    const standard = [
        "new", "open", "save", "|", "print", "preview", "plot", "web", "|", "cut", "copy", "paste", "match", "blockedit", "|",
        "undo", "v", "redo", "v", "|", "pan", "zoom", "zoomwin", "zoomprev", "|",
        "props", "center", "palettes", "sheetset", "markup", "calc", "|", "help",
    ];
    const drawBar = ["line", "xline", "pline", "polygon", "rect", "arc", "circle", "cloud", "spline", "ellipse", "ellarc", "insert", "block", "point", "hatch", "gradient", "region", "table", "text", "addsel"];
    const modifyBar = ["erase", "mcopy", "mirror", "offset", "array", "move", "rotate", "scale", "stretch", "trim", "extend", "breakpt", "break2", "join", "chamfer", "fillet", "blend", "explode"];
    const modes = [
        ["INFER", 51], ["捕捉", 42], ["栅格", 43], ["正交", 42, true], ["极轴", 42], ["对象捕捉", 78, true], ["3DOSNAP", 69],
        ["对象追踪", 78], ["DUCS", 42], ["DYN", 32], ["线宽", 43], ["TPY", 33], ["QP", 24], ["SC", 24], ["AM", 24],
    ];

    // latin runs are set in the mono face, half as wide as the chinese ones
    const runs = (s) => s.match(/[\x20-\x7e]+|[^\x20-\x7e]+/g);
    const latin = (s) => s.charCodeAt(0) < 127;
</script>

{#snippet ico(name, size)}
    <svg width={size} height={size} viewBox="0 0 32 32" fill="none" stroke={ink} stroke-width="1.4" aria-hidden="true">{@html icons[name]}</svg>
{/snippet}

{#snippet txt(s)}{#each runs(s) as r}<span class:mono={latin(r)}>{r}</span>{/each}{/snippet}

{#snippet winctl()}
    <div class="winctl">
        <button aria-label="最小化"><svg width="12" height="16"><path d="M1 10h10v3H1z" fill="#2b2b2b" /></svg></button>
        <button aria-label="还原"><svg width="14" height="16" fill="none" stroke="#2b2b2b" stroke-width="1.5"><path d="M5 5V2h8v7h-3M2 6h8v8H2z" /></svg></button>
        <button aria-label="关闭"><svg width="12" height="16"><path d="M2 4l8 8M10 4l-8 8" stroke="#2b2b2b" stroke-width="2.5" /></svg></button>
    </div>
{/snippet}

<svg class="defs" aria-hidden="true">
    <defs>
        <linearGradient id="steel" x2="0" y2="1"><stop offset="0" stop-color="#d3d7e0" /><stop offset="1" stop-color="#fff" /></linearGradient>
        <linearGradient id="blue" x2="1" y2="1"><stop offset="0" stop-color="#86c5ea" /><stop offset="1" stop-color="#d5ecf9" /></linearGradient>
        <linearGradient id="blue2" x2="0" y2="1"><stop offset="0" stop-color="#eef3fa" /><stop offset="1" stop-color="#9db9dc" /></linearGradient>
        <linearGradient id="shade" x2="0" y2="1"><stop offset="0" stop-color="#4c525c" /><stop offset="1" stop-color="#fff" /></linearGradient>
        <linearGradient id="ball" x2="0" y2="1"><stop offset="0" stop-color="#2ba5dc" /><stop offset="1" stop-color="#0f6f9a" /></linearGradient>
        <pattern id="diag" width="3" height="3" patternUnits="userSpaceOnUse"><path d="M0 0l3 3" stroke="#6d7a8c" stroke-width="0.8" /></pattern>
    </defs>
</svg>

<div class="app">
    <header class="titlebar">
        <button class="logo" aria-label="AutoCAD">
            <svg width="38" height="32" viewBox="0 0 38 32"><path d="M4 25L12 0h7l8 25h-7l-4-8-6 2-2 6z" fill="#d4220f" /><path d="M15 0h4l8 25h-7z" fill="#8d0f06" /><path d="M30 13h7l-3 4z" fill="#222" /></svg>
        </button>
        <div class="head">
            <div class="quick">
                <div class="qicons">
                    {#each ["new", "open", "save", "saveas", "print", "undo"] as q}
                        <button class="q" aria-label={q}>{@render ico(q, 24)}</button>
                    {/each}
                    <i class="tri"></i>
                    <button class="q" aria-label="redo">{@render ico("redo", 24)}</button>
                    <i class="tri"></i>
                </div>
                <label class="wspace">
                    <svg width="28" height="28" viewBox="0 0 32 32">{@html gear(16, 16, 12)}</svg>
                    <select aria-label="工作空间"><option>草图与注释</option></select>
                    <i class="tri dark"></i>
                </label>
                <i class="more"></i>
                <h1>AutoCAD2014 + MSteel V20200320 &nbsp;&nbsp;&nbsp;&nbsp;&nbsp;&nbsp;&nbsp;Drawing1.dwg</h1>
                {@render winctl()}
            </div>
            <nav class="menus">
                {#each menus as [name, key]}
                    <button>{name}<span class="mono">(<u>{key}</u>)</span></button>
                {/each}
                <button class="plain">{@render txt("M_批打印")}</button>
                <button class="plain">云建筑</button>
                {@render winctl()}
            </nav>
        </div>
    </header>

    <div class="steelrow">
        <nav class="steel">
            {#each steelMenus as m}<button>{m}</button>{/each}
            <button>{@render txt("【出图比例 1:100】")}</button>
            <button class="last">{@render txt("【绘图比例 1:100】")}</button>
        </nav>
    </div>

    <nav class="rtabs">
        {#each ribbonTabs as t, i}
            <button class:active={i === 0}>{@render txt(t)}</button>
        {/each}
        <button class="mini" aria-label="最小化功能区"><i></i></button>
        <i class="tri white"></i>
    </nav>

    <section class="ribbon">
        {#each panels as p}
            <div class="panel" style:width="{p.w}px">
                <div class="body">
                    {#each p.items as it}
                        <div class={it.kind} style:width="{it.w}px">
                            {#if it.kind === "big"}
                                <button>
                                    {@render ico(it.icon, 44)}
                                    {#each it.lines as l}<span>{l}</span>{/each}
                                    {#if it.arrow}<i class="tri dark {it.arrow}"></i>{/if}
                                </button>
                            {:else if it.kind !== "sep"}
                                {#each it.rows as [icon, label]}
                                    <button>{@render ico(icon, 24)}<span>{@render txt(label)}</span></button>
                                {/each}
                            {/if}
                        </div>
                    {/each}
                </div>
                <div class="ptitle">{p.title}</div>
            </div>
        {/each}
        <div class="rest"></div>
        <div class="float">
            <i class="grab"></i>
            {#each floatTabs as f}<button>{f}</button>{/each}
            <button class="ask" aria-label="帮助"><span>?</span></button>
        </div>
    </section>

    <div class="files">
        <div class="file">
            <svg class="shape" width="212" height="36" viewBox="0 0 212 36"><path d="M0 35C14 33 12 1 26 1H184C202 1 196 33 212 35" fill="#c9c9c9" stroke="#e3e3e3" /></svg>
            <span>Drawing1*</span>
            <button aria-label="关闭图形"><svg width="12" height="12"><path d="M1 1l10 10M11 1L1 11" stroke="#777" stroke-width="3" /></svg></button>
        </div>
        <button class="add" aria-label="新图形">
            <svg width="34" height="24"><path d="M1 1h22c6 0 10 5 10 11v11H12C5 20 4 8 1 1z" fill="#7d7d7d" stroke="#4a4a4a" stroke-width="2" /><path d="M18 7v11M12 12h12" stroke="#aaa" stroke-width="4" /></svg>
        </button>
    </div>

    <div class="dock">
        <div class="bar std">
            <i class="grip"></i>
            {#each standard as s}
                {#if s === "|"}<i class="div"></i>
                {:else if s === "v"}<i class="tri dark v"></i>
                {:else}<button class:narrow={s === "undo" || s === "redo"} aria-label={s}>{@render ico(s, 30)}</button>{/if}
            {/each}
        </div>
        <div class="pairbars">
            <div class="bar lay">
                <i class="grip"></i>
                <button aria-label="图层特性">{@render ico("layers", 30)}</button>
                <div class="combo layer">
                    <svg width="86" height="19" fill="none" stroke-width="1.2">
                        <circle cx="10" cy="7" r="5" fill="#ffe98a" stroke="#a98213" /><path d="M8 13h4v4H8z" fill="#888" stroke="#555" />
                        <circle cx="26" cy="9" r="4" fill="#ffe98a" stroke="#b48a14" /><path d="M26 1v3M26 14v3M18 9h3M31 9h3M20 3l2 2M30 13l2 2M32 3l-2 2M22 13l-2 2" stroke="#b48a14" />
                        <path d="M37 3h8v9h-8z" fill="#ddd" stroke="#aaa" /><circle cx="46" cy="12" r="3.500" fill="#ccc" stroke="#aaa" />
                        <path d="M55 9h9v8h-9z" fill="#7ec3e6" stroke="#1f6c9c" /><path d="M61 9V5c0-4 6-4 6 0v3" stroke="#1f6c9c" stroke-width="2" />
                        <path d="M72 4h8v11h-8z" stroke="#222" />
                    </svg>
                    <select aria-label="图层"><option>结构层</option></select>
                    <i class="drop"></i>
                </div>
                {#each ["layer1", "layer2", "layer3"] as l}<button aria-label={l}>{@render ico(l, 30)}</button>{/each}
            </div>
            <div class="bar prop">
                <i class="grip"></i>
                <div class="cell c1"><div class="combo"><i class="box"></i><select aria-label="颜色"><option>ByLayer</option></select><i class="drop"></i></div></div>
                <div class="cell c2"><div class="combo"><i class="ln"></i><select aria-label="线型"><option>ByLayer</option></select><i class="drop"></i></div></div>
                <div class="cell c3"><div class="combo"><i class="ln short"></i><select aria-label="线宽"><option>B...er</option></select><i class="drop"></i></div></div>
                <div class="cell c4"><div class="combo off"><select aria-label="打印样式" disabled><option>BvColor</option></select><i class="drop"></i></div></div>
            </div>
        </div>
    </div>

    <main>
        <aside class="side">
            <i class="sgrip"></i>
            {#each drawBar as d}<button aria-label={d}>{@render ico(d, 32)}</button>{/each}
        </aside>

        <div class="doc">
            <div class="view">
                <div class="canvas">
                    <svg class="scene" width="100%" height="100%" fill="none">
                        <path d="M123 56H300" stroke="#e07bb0" stroke-width="16" />
                        <g stroke="#7fe080" stroke-width="8"><path d="M501 48L667 383M580 77L562 296M385 259L727 157" /></g>
                        <path d="M865 0v33M1333 0v199M1120 77h403" stroke="#e4e4e4" />
                        <path d="M1146 298h424" stroke="#74c874" />
                        <path d="M50 758V808" stroke="#4cb457" stroke-width="5" /><path d="M48 807H100" stroke="#d24545" stroke-width="4" />
                        <path d="M46 747l6 6 6-6M52 753v6" stroke="#5a9a5a" /><path d="M94 794l12 12M106 794l-12 12" stroke="#a44" />
                        <path d="M49 796l6 4-6 4" stroke="#3d62c8" stroke-width="2" />
                    </svg>
                    <span class="vlabel">[−][俯视][真实]</span>
                    <div class="compass">
                        <i class="ring"></i>
                        <button class="face">上</button>
                        <span class="n">北</span><span class="w">西</span><span class="e">东</span><span class="s">南</span>
                    </div>
                    <button class="ucs">未命名 ▽</button>
                    <div class="navbar">
                        <svg width="32" height="212" fill="none" stroke="#2a2a2a" stroke-width="1.2">
                            <circle cx="26" cy="5" r="3" /><circle cx="16" cy="29" r="11" /><circle cx="16" cy="29" r="6" /><path d="M14 50h5l-2 3z" fill="#222" /><path d="M0 56h32" stroke="#666" />
                            <path d="M10 82l-4-8 4 2-1-11 3 7 1-9 3 8 3-7 1 9 4-5-4 13-3 2z" /><path d="M5 91l18 16M22 91L6 107" /><circle cx="21" cy="105" r="5" /><path d="M25 108l4 5M14 120h5l-2 3z" />
                            <ellipse cx="16" cy="140" rx="11" ry="5" /><path d="M14 129h4v22h-4zM14 157h5l-2 3z" /><path d="M0 165h32" stroke="#666" />
                            <path d="M5 169h6v7H5zM13 169h6v7h-6zM21 169h6v7h-6zM5 180h15v13H5zM10 183l6 4-6 3z" /><circle cx="26" cy="206" r="3.500" />
                        </svg>
                    </div>
                </div>
                <div class="vscroll"><button aria-label="向上"><i></i></button></div>
            </div>
            <div class="layouts">
                <div class="steps">
                    <button aria-label="首"><svg width="14" height="18"><path d="M4 3v12" stroke="#777" stroke-width="2" /><path d="M12 3v12L6 9z" fill="#777" /></svg></button>
                    <button aria-label="前"><svg width="14" height="18"><path d="M10 3v12L4 9z" fill="#777" /></svg></button>
                    <button aria-label="后"><svg width="14" height="18"><path d="M4 3v12l6-6z" fill="#777" /></svg></button>
                    <button aria-label="末"><svg width="14" height="18"><path d="M10 3v12" stroke="#777" stroke-width="2" /><path d="M2 3v12l6-6z" fill="#777" /></svg></button>
                </div>
                <button class="ltab on">模型</button>
                <button class="ltab">{@render txt("布局1")}</button><i class="slash"></i>
                <button class="ltab">{@render txt("布局2")}</button><i class="slash"></i>
                <div class="hscroll"><i class="split"></i><button aria-label="向左"><i></i></button></div>
            </div>
        </div>

        <aside class="side">
            <i class="sgrip"></i>
            {#each modifyBar as d}<button aria-label={d}>{@render ico(d, 32)}</button>{/each}
        </aside>
    </main>

    <div class="cmd">
        <div class="chandle">
            <i class="dots"></i>
            <button aria-label="关闭"><svg width="16" height="16"><path d="M2 2l12 12M14 2L2 14" stroke="#fff" stroke-width="2.500" /></svg></button>
            <button aria-label="自定义"><svg width="22" height="22" fill="none"><path d="M8 8l11 12" stroke="#e4e4e4" stroke-width="4" /><path d="M8 2a5 5 0 1 1-6 6" stroke="#e4e4e4" stroke-width="3" /></svg></button>
        </div>
        <button class="prompt" aria-label="最近命令"><svg width="24" height="24" fill="none"><rect x="1" y="1" width="22" height="22" rx="3" fill="#dfe3ea" stroke="#a8adb8" /><path d="M5 7l5 5-5 5M12 18h7" stroke="#555" stroke-width="2" /></svg><i class="tri grey"></i></button>
        <input aria-label="命令" placeholder="键入命令" />
    </div>

    <footer class="status">
        <span class="xyz">12185.0209, -933.2444, 0.0000</span>
        <div class="modes">
            {#each modes as [m, w, on]}
                <button class:on style:width="{w}px">{@render txt(m)}</button>
            {/each}
        </div>
        <div class="tray">
            <button class="t1">模型</button>
            <button><svg width="18" height="22"><path d="M3 4h12v14H3z" fill="#fff" stroke="#333" /><path d="M6 7l6 8H6z" stroke="#333" fill="none" /></svg></button>
            <button><svg width="20" height="22"><path d="M1 5h8v8H1zM11 5h8v8h-8z" fill="#eee" stroke="#333" /></svg></button>
            <i class="gap"></i>
            <button class="t2"><svg width="20" height="22" viewBox="0 0 32 32">{@html person("#eee")}</svg><span class="mono">1:1</span><i class="tri dark"></i></button>
            <button><svg width="20" height="22" viewBox="0 0 32 32">{@html person("#eee")}<circle cx="23" cy="17" r="5" fill="#f3c74c" /></svg></button>
            <button><svg width="20" height="22" viewBox="0 0 32 32">{@html person("#777")}</svg></button>
            <i class="gap thin"></i>
            <button><svg width="20" height="22" viewBox="0 0 32 32">{@html gear(16, 16, 11)}</svg></button>
            <button><svg width="20" height="22" fill="none" stroke="#222" stroke-width="1.500"><path d="M2 11h10v8H2zM10 11V6c0-4 7-4 7 0v6" fill="#eee" /></svg></button>
            <button><svg width="20" height="22"><circle cx="9" cy="11" r="7" fill="#7c8694" /><path d="M7 4l6 8" stroke="#ddd" stroke-width="2" /></svg></button>
            <button class="t3"><svg width="18" height="22"><circle cx="9" cy="10" r="6" fill="#ffe9a0" stroke="#a98213" /></svg></button>
            <i class="tri dark"></i>
            <button><svg width="18" height="22"><path d="M2 5h14v14H2z" fill="#fff" stroke="#333" /><path d="M2 5h14v3H2z" fill="#3d5d86" /></svg></button>
        </div>
    </footer>

    <section class="palette">
        <div class="grid">
            {#each tools as t, i}
                <button aria-label="工具 {i + 1}"><svg width="46" height="46" viewBox="0 0 46 46" fill="none" stroke="#222" stroke-width="1.5">{@html t}</svg></button>
            {/each}
        </div>
        <div class="caption">
            <button aria-label="关闭"><svg width="14" height="14"><path d="M3 3l8 8M11 3l-8 8" stroke="#111" stroke-width="2.500" /></svg></button>
            <button aria-label="自动隐藏"><svg width="14" height="14"><path d="M5 3v8L0 7zM7 3v8l4-4z" fill="#111" /><path d="M12 1v12" stroke="#111" stroke-width="1.500" /></svg></button>
            <button aria-label="特性"><svg width="14" height="14"><path d="M1 2h12v10H1z" fill="#fff" stroke="#111" stroke-width="2" /><path d="M7 4v7M3 5h2M3 8h2M9 6h3M9 9h3" stroke="#111" /></svg></button>
            <span>Tools</span>
            <svg width="16" height="16"><path d="M0 0h16v16H0z" fill="#e8555a" /><path d="M2 12L8 2l5 10H9l-4-2z" fill="#5c0708" /></svg>
        </div>
    </section>
    <svg class="pointer" width="700" height="450" aria-hidden="true"><path d="M6 8L450 286L510 330L556 374L536 366L500 340L444 294Z" fill="#f8383a" stroke="#f8383a" /><path d="M287 153l9-5v10z" fill="#e22" /></svg>
    <div class="mark">知乎 @知足</div>
</div>

<style>
    :global(body) {
        margin: 0;
        background: #666;
    }

    .app {
        position: relative;
        display: flex;
        flex-direction: column;
        height: 100vh;
        overflow: hidden;
        background: #666;
        color: #222;
        font-family: "Noto Sans CJK SC", sans-serif;
        font-size: 18px;
        line-height: 20px;
    }

    .defs {
        position: absolute;
        width: 0;
        height: 0;
    }

    button,
    select,
    input {
        margin: 0;
        padding: 0;
        border: 0;
        background: none;
        color: inherit;
        font: inherit;
        border-radius: 0;
        appearance: none;
        white-space: nowrap;
    }

    svg {
        display: block;
        flex: none;
    }

    .mono {
        font-family: "Liberation Mono", monospace;
        font-size: 15px;
        line-height: 1;
        white-space: pre;
    }

    .tri {
        flex: none;
        width: 0;
        height: 0;
        border: 4px solid transparent;
        border-top: 6px solid #444;
        border-bottom: 0;
    }

    .tri.dark {
        border-top-color: #222;
    }

    .tri.white {
        border-top-color: #eee;
    }

    .tri.grey {
        border-top-color: #888;
    }

    /* title bar */
    .titlebar {
        display: flex;
        flex: none;
        height: 61px;
        background: linear-gradient(#a6a6a6, #8a8a8a 45%, #555);
        border-bottom: 1px solid #2c2c2c;
        box-sizing: border-box;
    }

    .logo {
        width: 41px;
        height: 36px;
        border: 1px solid #111;
        border-top: 0;
    }

    .head {
        flex: 1;
        min-width: 0;
    }

    .quick,
    .menus,
    .qicons,
    .wspace,
    .winctl {
        display: flex;
        align-items: center;
    }

    .quick {
        height: 28px;
    }

    .qicons {
        width: 296px;
        height: 26px;
        padding-left: 8px;
        box-sizing: border-box;
    }

    .q {
        flex: none;
        width: 36px;
        display: flex;
        justify-content: center;
    }

    .qicons .tri {
        margin: 0 4px;
    }

    .wspace {
        width: 269px;
        height: 28px;
        box-sizing: border-box;
        padding: 0 3px 10px;
        border: 1px solid #6a6a6a;
        border-top: 0;
        background: linear-gradient(#d9d9d9, #bdbdbd);
    }

    .wspace svg {
        margin-top: 6px;
    }

    .wspace select {
        flex: 1;
        padding-left: 3px;
        color: #111;
    }

    .more {
        width: 10px;
        height: 2px;
        margin: 0 8px 12px;
        background: #111;
        position: relative;
    }

    .more::after {
        content: "";
        position: absolute;
        top: 4px;
        border: 5px solid transparent;
        border-top: 6px solid #111;
        border-bottom: 0;
    }

    h1 {
        flex: 1;
        margin: 0;
        padding-left: 694px;
        white-space: pre;
        color: #fff;
        font: bold 15px/28px "Liberation Mono", monospace;
    }

    .winctl {
        gap: 4px;
        margin: 0 4px 0 auto;
    }

    .menus {
        height: 32px;
        padding: 1px 0 0 14px;
        box-sizing: border-box;
        color: #fff;
    }

    .menus > button {
        width: 86px;
        text-align: left;
    }

    .menus > .plain {
        width: 88px;
        margin-left: -6px;
        margin-right: 6px;
    }

    /* steel menu strip */
    .steelrow {
        flex: none;
        height: 31px;
        background: #686868;
    }

    .steel {
        display: flex;
        align-items: center;
        gap: 11px;
        width: max-content;
        height: 26px;
        padding: 0 12px 0 7px;
        margin: 1px 0 0 5px;
        border: solid #fff;
        border-width: 2px 1px 1px 2px;
        outline: 1px solid #999;
        background: #d6d0c8;
        color: #111;
    }

    .steel .last {
        margin-left: 8px;
    }

    /* ribbon */
    .rtabs {
        display: flex;
        align-items: flex-end;
        flex: none;
        height: 30px;
        padding-left: 8px;
        background: #404040;
        color: #eee;
    }

    .rtabs > button {
        padding: 0 15px 4px;
        height: 27px;
        line-height: 20px;
    }

    .rtabs > .active {
        background: linear-gradient(#bbb, #f5f5f5);
        color: #222;
        border-radius: 3px 3px 0 0;
    }

    .rtabs > .mini {
        width: 20px;
        height: 12px;
        margin: 0 9px 8px 31px;
        padding: 0;
        border-radius: 3px;
        background: #e2e2ea;
        display: flex;
        justify-content: center;
        align-items: center;
    }

    .mini i {
        border: 4px solid transparent;
        border-bottom: 5px solid #333;
        border-top: 0;
    }

    .rtabs > .tri {
        margin-bottom: 11px;
    }

    .ribbon {
        position: relative;
        display: flex;
        flex: none;
        height: 149px;
        padding-left: 4px;
        box-sizing: border-box;
        border-bottom: 3px solid #8b8b8b;
        background: #fff;
        box-shadow: inset 3px 0 #555;
    }

    .panel {
        flex: none;
        box-sizing: border-box;
        border-right: 2px solid #a4a4a4;
        padding-top: 2px;
    }

    .panel:nth-child(6) {
        border-right-color: #fff;
    }

    .body {
        display: flex;
        height: 117px;
    }

    .big,
    .col,
    .pair,
    .sep {
        flex: none;
    }

    .big button {
        position: relative;
        width: 100%;
        padding-top: 11px;
        display: flex;
        flex-direction: column;
        align-items: center;
        line-height: 21px;
    }

    .big svg {
        margin-bottom: 6px;
    }

    .beside {
        position: absolute;
        right: 0;
        bottom: 12px;
    }

    .below {
        margin-top: 3px;
    }

    .col {
        padding: 4px 0 0 5px;
        box-sizing: border-box;
    }

    .col button {
        display: flex;
        align-items: center;
        gap: 7px;
        height: 36px;
    }

    .pair button {
        width: 100%;
        display: flex;
        flex-direction: column;
        align-items: center;
        padding-top: 10px;
        line-height: 20px;
    }

    .sep::before {
        content: "";
        display: block;
        width: 1px;
        height: 108px;
        margin: 5px auto 0;
        background: #ccc;
    }

    .ptitle {
        height: 24px;
        border-top: 2px solid #ccc;
        background: #eee;
        text-align: center;
        color: #333;
    }

    .rest {
        flex: 1;
        margin: 2px 3px 2px 0;
        background: linear-gradient(#d3d3d3, #8e8e8e);
    }

    .float {
        position: absolute;
        top: -19px;
        right: 200px;
        display: flex;
        gap: 1px;
        height: 22px;
        color: #111;
        font-size: 12px;
        background: #d6d0c8;
    }

    .grab {
        width: 7px;
        background: linear-gradient(#4d79ad, #e8eef6);
    }

    .float button {
        padding: 0 3px 0 4px;
        background: linear-gradient(135deg, #dedad3, #aaa69e);
    }

    .float .ask {
        width: 21px;
        background: #d6d0c8;
    }

    .ask span {
        display: block;
        width: 14px;
        border-radius: 50%;
        color: #fff;
        background: #3b82cc;
        line-height: 14px;
    }

    /* file tabs */
    .files {
        display: flex;
        align-items: center;
        flex: none;
        height: 41px;
        background: linear-gradient(#a8a8a8, #919191);
        border-bottom: 1px solid #808080;
        box-sizing: border-box;
    }

    .file {
        position: relative;
        display: flex;
        align-items: center;
        gap: 58px;
        width: 178px;
        height: 36px;
        padding: 4px 0 0 48px;
        box-sizing: content-box;
        font: 15px/20px "Liberation Mono", monospace;
        color: #111;
    }

    .file .shape {
        position: absolute;
        left: 20px;
        top: 6px;
    }

    .file span,
    .file button {
        position: relative;
    }

    .add {
        margin-top: 4px;
    }

    /* docked toolbars */
    .dock {
        flex: none;
        height: 91px;
        padding: 5px 2px;
        box-sizing: border-box;
    }

    .bar {
        display: flex;
        align-items: center;
        width: max-content;
        height: 39px;
        background: #efefef;
        outline: 1px solid #3c3c3c;
    }

    .grip {
        width: 6px;
        height: 100%;
        background: radial-gradient(#222 1px, #666 1px) 0 0 / 3px 3px;
    }

    .bar button {
        width: 39px;
        display: flex;
        justify-content: center;
    }

    .bar .narrow {
        width: 36px;
    }

    .bar .v {
        margin: 0 2px 8px;
    }

    .div {
        width: 1px;
        height: 36px;
        margin: 0 3px 0 2px;
        background: #8a8a8a;
    }

    .pairbars {
        display: flex;
        gap: 4px;
        margin-top: 3px;
    }

    .combo {
        display: flex;
        align-items: center;
        height: 20px;
        background: #fff;
        color: #111;
    }

    .combo select {
        flex: 1;
        min-width: 0;
        height: 20px;
        font: 15px/22px "Liberation Mono", "Noto Sans CJK SC", monospace;
        opacity: 1;
    }

    .combo.layer select {
        font: 18px/20px "Noto Sans CJK SC", sans-serif;
    }

    .drop {
        width: 21px;
        height: 18px;
        border: 1px solid;
        border-color: #fff #444 #444 #fff;
        background: #d6d0c8;
        box-sizing: border-box;
        position: relative;
    }

    .drop::after {
        content: "";
        position: absolute;
        left: 5px;
        top: 6px;
        border: 4px solid transparent;
        border-top: 5px solid #111;
        border-bottom: 0;
    }

    .combo.layer {
        width: 297px;
        align-self: flex-start;
        margin: 2px 3px 0 0;
    }

    .lay {
        width: 462px;
    }

    .prop {
        width: 579px;
    }

    .cell {
        height: 39px;
        box-sizing: border-box;
        padding: 2px 4px 0 3px;
        border-right: 1px solid #888;
        background: linear-gradient(#999, #999) 50% 24px / 1px 13px no-repeat;
    }

    .c1 {
        width: 153px;
    }

    .c2 {
        width: 166px;
    }

    .c3 {
        width: 131px;
    }

    .c4 {
        flex: 1;
        border: 0;
    }

    .box {
        width: 7px;
        height: 10px;
        margin: 0 4px;
        border: 1px solid #222;
    }

    .ln {
        width: 60px;
        height: 1px;
        margin: 0 4px;
        background: #111;
    }

    .ln.short {
        width: 36px;
    }

    .off {
        background: #d6d0c8;
        color: #999;
        padding-left: 8px;
    }

    .off .drop::after {
        border-top-color: #999;
    }

    /* drawing window */
    main {
        display: flex;
        align-items: flex-start;
        flex: 1;
        min-height: 0;
        padding: 0 4px 0 1px;
    }

    .side {
        width: 39px;
        background: #efefef;
        outline: 1px solid #3a3a3a;
    }

    .side > button {
        width: 38px;
        height: 38px;
        display: flex;
        align-items: center;
        justify-content: center;
    }

    .sgrip {
        display: block;
        height: 9px;
        background: radial-gradient(#111 1px, transparent 1px) 2px 2px / 3px 3px repeat-x #5f5f5f;
    }

    .doc {
        display: flex;
        flex-direction: column;
        flex: 1;
        min-width: 0;
        align-self: stretch;
        margin: 0 5px 0 7px;
        border-top: 2px solid #8c8c8c;
        border-right: 2px solid #fff;
        box-sizing: border-box;
    }

    .view {
        display: flex;
        flex: 1;
        min-height: 0;
    }

    .canvas {
        position: relative;
        flex: 1;
        background: #000;
        overflow: hidden;
    }

    .scene {
        position: absolute;
    }

    .vlabel {
        position: absolute;
        left: 3px;
        top: 3px;
        color: #ddd;
        font-size: 12px;
    }

    .compass {
        position: absolute;
        right: 18px;
        top: 16px;
        width: 130px;
        height: 132px;
        color: #999;
        font-weight: bold;
    }

    .ring {
        position: absolute;
        left: 5px;
        top: 6px;
        width: 90px;
        height: 90px;
        border: 15px solid #2c2c2c;
        border-radius: 50%;
    }

    .face {
        position: absolute;
        left: 39px;
        top: 40px;
        width: 52px;
        height: 52px;
        background: #9095a0;
        border: 10px solid #9c9c9c;
        box-sizing: border-box;
        color: #4c5058;
        font-size: 28px;
        font-weight: normal;
        line-height: 30px;
    }

    .compass span {
        position: absolute;
        font-size: 19px;
    }

    .n {
        left: 56px;
        top: 0;
    }

    .w {
        left: -1px;
        top: 55px;
    }

    .e {
        left: 112px;
        top: 55px;
    }

    .s {
        left: 56px;
        top: 113px;
    }

    .ucs {
        position: absolute;
        right: 54px;
        top: 169px;
        width: 58px;
        height: 18px;
        border-radius: 4px;
        background: #8c8c92;
        color: #55565c;
        font-size: 11px;
        line-height: 16px;
    }

    .navbar {
        position: absolute;
        right: 4px;
        top: 212px;
        border-radius: 4px;
        background: #404040;
    }

    .vscroll,
    .hscroll {
        background: repeating-conic-gradient(#fff 0 25%, #d6d0c8 0 50%) 0 0 / 2px 2px;
    }

    .vscroll {
        width: 24px;
    }

    .vscroll button,
    .hscroll button {
        width: 24px;
        height: 23px;
        display: flex;
        align-items: center;
        justify-content: center;
        background: #d6d0c8;
        border: 1px solid;
        border-color: #fff #555 #555 #fff;
    }

    .vscroll button i {
        border: 6px solid transparent;
        border-bottom: 7px solid #000;
        border-top: 0;
    }

    .layouts {
        display: flex;
        flex: none;
        height: 23px;
        margin-bottom: 5px;
        border-bottom: 2px solid #fff;
        background: #d6d0c8;
        color: #111;
    }

    .steps {
        display: flex;
        margin-right: 2px;
    }

    .steps button {
        width: 22px;
        height: 22px;
        padding-left: 3px;
        box-sizing: border-box;
        border-right: 1px solid #999;
    }

    .ltab {
        height: 22px;
        padding: 0 12px;
    }

    .ltab.on {
        padding: 0 17px 0 15px;
        margin-right: -6px;
        background: #000;
        color: #fff;
        clip-path: polygon(0 0, 100% 0, 91% 100%, 8% 100%);
    }

    .slash {
        width: 2px;
        height: 22px;
        background: #444;
        transform: skewX(-14deg);
    }

    .hscroll {
        display: flex;
        width: 856px;
        margin-left: auto;
    }

    .hscroll button {
        width: 25px;
        height: 23px;
    }

    .hscroll button i {
        border: 6px solid transparent;
        border-right: 7px solid #000;
        border-left: 0;
    }

    .split {
        width: 7px;
        background: #d6d0c8;
        border-right: 2px solid #555;
        border-left: 1px solid #fff;
    }

    /* command line */
    .cmd {
        display: flex;
        align-items: center;
        flex: none;
        height: 54px;
        background: #fff;
    }

    .chandle {
        display: flex;
        align-items: center;
        gap: 14px;
        width: 82px;
        height: 100%;
        padding-left: 9px;
        box-sizing: border-box;
        background: linear-gradient(#7d7d7d, #454545);
    }

    .dots {
        height: 26px;
        margin-right: -3px;
        border-left: 2px dotted #aaa;
    }

    .prompt {
        display: flex;
        align-items: center;
        gap: 4px;
        margin: 0 14px 0 7px;
    }

    .cmd input {
        flex: 1;
        height: 40px;
        margin-bottom: 6px;
        font-size: 29px;
        font-style: italic;
        line-height: 40px;
    }

    .cmd input::placeholder {
        color: #999;
        opacity: 1;
    }

    /* status bar, its lower part runs off the window */
    .status {
        display: flex;
        flex: none;
        height: 17px;
        overflow: hidden;
        border-top: 1px solid #111;
        box-sizing: border-box;
        background: linear-gradient(#a0a0a0, #808080);
        color: #111;
    }

    .xyz {
        width: 303px;
        padding-left: 12px;
        font: 15px/22px "Liberation Mono", monospace;
    }

    .modes,
    .tray {
        display: flex;
        align-items: flex-start;
    }

    .modes button,
    .tray button {
        height: 24px;
        box-sizing: border-box;
        border: 1px solid #888;
        border-color: #ddd #555 #555 #ddd;
        background: linear-gradient(#c8c8c8, #a0a0a0);
        line-height: 20px;
        overflow: hidden;
        text-align: center;
    }

    .modes .on {
        background: linear-gradient(#d9f2f8, #7cc6dc);
    }

    .tray {
        margin-left: auto;
    }

    .tray button {
        display: flex;
        justify-content: center;
        width: 22px;
    }

    .tray .t1 {
        width: 42px;
    }

    .tray .t2 {
        width: 63px;
        align-items: center;
    }

    .tray .t3 {
        width: 34px;
        background: #777;
    }

    .tray > .tri {
        margin: 10px 2px 0;
    }

    .gap {
        width: 24px;
        height: 24px;
        background: #666;
    }

    .gap.thin {
        width: 6px;
    }

    /* tool palette */
    .palette {
        position: absolute;
        right: 0;
        bottom: 21px;
        display: flex;
        width: 815px;
        height: 144px;
        padding: 3px 0 3px 3px;
        box-sizing: border-box;
        border: 1px solid #444;
        border-radius: 5px;
        background: #cfcfcf;
    }

    .grid {
        display: grid;
        grid-template-columns: repeat(11, 66px);
        grid-template-rows: 66px 66px;
        flex: 1;
        border: 1px solid #444;
        border-radius: 4px;
        background: #efefef;
    }

    .grid button {
        display: flex;
        align-items: center;
        justify-content: center;
    }

    .caption {
        display: flex;
        flex-direction: column;
        align-items: center;
        gap: 5px;
        width: 24px;
    }

    .caption span {
        writing-mode: vertical-rl;
        transform: rotate(180deg);
        margin: 2px 0 3px;
        font: bold 16px/20px "Liberation Mono", monospace;
        color: #111;
    }

    .pointer {
        position: absolute;
        right: 0;
        bottom: 0;
        pointer-events: none;
    }

    .mark {
        position: absolute;
        right: 70px;
        bottom: 61px;
        color: #fff;
        font-size: 77px;
        line-height: 100px;
        font-weight: 500;
        text-shadow: 6px 5px 0 rgba(110, 110, 110, 0.6);
        pointer-events: none;
    }
</style>
